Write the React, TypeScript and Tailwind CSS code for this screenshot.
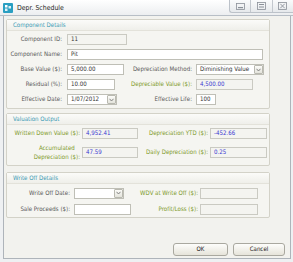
import React from 'react';

type BoxProps = { w: string; value?: string; ro?: boolean; blue?: boolean; drop?: boolean };

const Chevron: React.FC = () => (
  <div className="w-[9px] h-[9px] shrink-0 flex items-center justify-center border border-[#b9b9b0] bg-gradient-to-b from-[#fbfbf8] to-[#e4e4dc] rounded-[1px]">
    <svg width="5" height="4" viewBox="0 0 5 4">
      <path d="M0.5 0.8 L2.5 3 L4.5 0.8" fill="none" stroke="#777" strokeWidth="0.9" />
    </svg>
  </div>
);

const Box: React.FC<BoxProps> = ({ w, value, ro, blue, drop }) => (
  <div
    className={`${w} h-[11px] shrink-0 flex items-center overflow-hidden border ${
      ro ? 'border-[#cacac2] bg-[#f4f4f0]' : 'border-[#bfbfb6] bg-white'
    }`}
  >
    <span className={`flex-1 pl-[3px] leading-none whitespace-nowrap ${blue ? 'text-[#3a3ad0]' : 'text-[#333]'}`}>{value}</span>
    {drop && <Chevron />}
  </div>
);

const Group: React.FC<{ title: string; children: React.ReactNode; className?: string }> = ({ title, children, className }) => (
  <div className={`w-[264px] border border-[#d3d2c8] rounded-[2px] bg-[#f5f5f1] ${className ?? ''}`}>
    <div className="h-[11px] flex items-center pl-[6px] bg-gradient-to-b from-[#fbfbf9] to-[#efefea] border-b border-[#e3e2da] text-[#3d9bb5]">
      {title}
    </div>
    {children}
  </div>
);

const Lbl: React.FC<{ w: string; green?: boolean; children: React.ReactNode }> = ({ w, green, children }) => (
  <div className={`${w} shrink-0 text-right leading-none whitespace-nowrap ${green ? 'text-[#7f9a2a]' : 'text-[#5a5a5a]'}`}>{children}</div>
);

const WinBtn: React.FC<{ kind: 'min' | 'max' | 'close' }> = ({ kind }) => (
  <div className="flex-1 flex items-center justify-center border-l border-[#c3c8ce] first:border-l-0">
    <svg width="9" height="8" viewBox="0 0 9 8">
      {kind === 'min' && (
        <>
          <rect x="0.5" y="1.5" width="8" height="6" fill="none" stroke="#8a9098" strokeWidth="0.8" />
          <rect x="2" y="5" width="5" height="1.2" fill="#8a9098" />
        </>
      )}
      {kind === 'max' && (
        <>
          <rect x="0.5" y="0.5" width="8" height="7" fill="none" stroke="#8a9098" strokeWidth="0.8" />
          <rect x="2" y="2" width="5" height="1" fill="#8a9098" />
          <rect x="2" y="4.5" width="5" height="1" fill="#8a9098" />
        </>
      )}
      {kind === 'close' && (
        <>
          <rect x="0.5" y="0.5" width="8" height="7" fill="none" stroke="#8a9098" strokeWidth="0.8" />
          <path d="M2.3 1.8 L6.7 6.2 M6.7 1.8 L2.3 6.2" stroke="#8a9098" strokeWidth="0.9" />
        </>
      )}
    </svg>
  </div>
);

export default function App() {
  return (
    <div className="w-[293px] h-[262px] flex flex-col bg-[#eef0f2] text-[6.1px] font-['DejaVu_Sans_Condensed','Liberation_Sans',Arial,sans-serif] overflow-hidden">
      {/* title bar */}
      <div className="h-[16px] shrink-0 flex items-start bg-gradient-to-b from-[#ffffff] to-[#eceef0] border-b border-[#b7bec6]">
        <div className="mt-[3px] ml-[3px] w-[10px] h-[10px] rounded-[1px] bg-[#2a9fc2] flex items-center justify-center">
          <svg width="8" height="8" viewBox="0 0 8 8">
            <rect x="1" y="1" width="2.5" height="2.5" fill="#fff" />
            <rect x="4.5" y="2" width="2.5" height="2.5" fill="#fff" opacity="0.85" />
            <rect x="1" y="4.5" width="2.5" height="2.5" fill="#fff" opacity="0.85" />
          </svg>
        </div>
        <div className="ml-[4px] mt-[3px] text-[6.9px] leading-[10px] text-[#1e1e1e]">Depr. Schedule</div>
        <div className="ml-auto w-[64px] h-[13px] flex border border-t-0 border-r-0 border-[#bcc2c9] rounded-bl-[3px] bg-gradient-to-b from-[#fafbfc] to-[#e6e9ec]">
          <WinBtn kind="min" />
          <WinBtn kind="max" />
          <WinBtn kind="close" />
        </div>
      </div>

      {/* body */}
      <div className="flex-1 ml-[3px] mr-[2px] mb-[3px] border border-t-0 border-[#aeb4ba] bg-[#f2f2ee] flex flex-col pl-[2px] pt-[3px]">
        <Group title="Component Details" className="h-[90px]">
          <div className="pt-[1px]">
            <div className="h-[15px] flex items-center">
              <Lbl w="w-[55px]">Component ID:</Lbl>
              <div className="ml-[5px]"><Box w="w-[60px]" value="11" ro /></div>
            </div>
            <div className="h-[15px] flex items-center">
              <Lbl w="w-[55px]">Component Name:</Lbl>
              <div className="ml-[5px]"><Box w="w-[196px]" value="Pit" /></div>
            </div>
            <div className="h-[15px] flex items-center">
              <div className="w-[118px] shrink-0 flex items-center">
                <Lbl w="w-[55px]">Base Value ($):</Lbl>
                <div className="ml-[5px]"><Box w="w-[57px]" value="5,000.00" /></div>
              </div>
              <Lbl w="w-[67px]">Depreciation Method:</Lbl>
              <div className="ml-[4px]"><Box w="w-[68px]" value="Diminishing Value" drop /></div>
            </div>
            <div className="h-[15px] flex items-center">
              <div className="w-[118px] shrink-0 flex items-center">
                <Lbl w="w-[55px]">Residual (%):</Lbl>
                <div className="ml-[5px]"><Box w="w-[48px]" value="10.00" /></div>
              </div>
              <Lbl w="w-[67px]" green>Depreciable Value ($):</Lbl>
              <div className="ml-[4px]"><Box w="w-[57px]" value="4,500.00" ro blue /></div>
            </div>
            <div className="h-[15px] flex items-center">
              <div className="w-[118px] shrink-0 flex items-center">
                <Lbl w="w-[55px]">Effective Date:</Lbl>
                <div className="ml-[5px]"><Box w="w-[50px]" value="1/07/2012" drop /></div>
              </div>
              <Lbl w="w-[67px]">Effective Life:</Lbl>
              <div className="ml-[4px]"><Box w="w-[20px]" value="100" /></div>
            </div>
          </div>
        </Group>

        <Group title="Valuation Output" className="mt-[4px] h-[53px]">
          <div className="pt-[2px]">
            <div className="h-[13px] flex items-center">
              <div className="w-[132px] shrink-0 flex items-center">
                <Lbl w="w-[73px]" green>Written Down Value ($):</Lbl>
                <div className="ml-[2px]"><Box w="w-[56px]" value="4,952.41" ro blue /></div>
              </div>
              <Lbl w="w-[69px]" green>Depreciation YTD ($):</Lbl>
              <div className="ml-[2px]"><Box w="w-[57px]" value="-452.66" ro blue /></div>
            </div>
            <div className="h-[24px] flex items-center">
              <div className="w-[132px] shrink-0 flex items-center">
                <div className="w-[73px] shrink-0 flex justify-end">
                  <div className="text-center text-[#7f9a2a] leading-[9px] whitespace-nowrap">
                    Accumulated
                    <br />
                    Depreciation ($):
                  </div>
                </div>
                <div className="ml-[2px]"><Box w="w-[56px]" value="47.59" ro blue /></div>
              </div>
              <Lbl w="w-[69px]" green>Daily Depreciation ($):</Lbl>
              <div className="ml-[2px]"><Box w="w-[57px]" value="0.25" ro blue /></div>
            </div>
          </div>
        </Group>

        <Group title="Write Off Details" className="mt-[6px] h-[46px]">
          <div className="pt-[1px]">
            <div className="h-[16px] flex items-center">
              <div className="w-[125px] shrink-0 flex items-center">
                <Lbl w="w-[63px]">Write Off Date:</Lbl>
                <div className="ml-[4px]"><Box w="w-[50px]" value="" drop /></div>
              </div>
              <Lbl w="w-[66px]" green>WDV at Write Off ($):</Lbl>
              <div className="ml-[2px]"><Box w="w-[58px]" value="" ro /></div>
            </div>
            <div className="h-[16px] flex items-center">
              <div className="w-[125px] shrink-0 flex items-center">
                <Lbl w="w-[63px]">Sale Proceeds ($):</Lbl>
                <div className="ml-[4px]"><Box w="w-[57px]" value="" /></div>
              </div>
              <Lbl w="w-[66px]" green>Profit/Loss ($):</Lbl>
              <div className="ml-[2px]"><Box w="w-[58px]" value="" ro /></div>
            </div>
          </div>
        </Group>

        <div className="flex-1" />
        <div className="flex justify-end gap-[5px] pr-[5px] pb-[2px]">
          <button className="w-[55px] h-[13px] rounded-[3px] border border-[#a9a89f] bg-gradient-to-b from-[#fdfdfb] to-[#e6e4da] text-[#222] leading-none">
            OK
          </button>
          <button className="w-[52px] h-[13px] rounded-[3px] border border-[#a9a89f] bg-gradient-to-b from-[#fdfdfb] to-[#e6e4da] text-[#222] leading-none">
            Cancel
          </button>
        </div>
      </div>
    </div>
  );
}
